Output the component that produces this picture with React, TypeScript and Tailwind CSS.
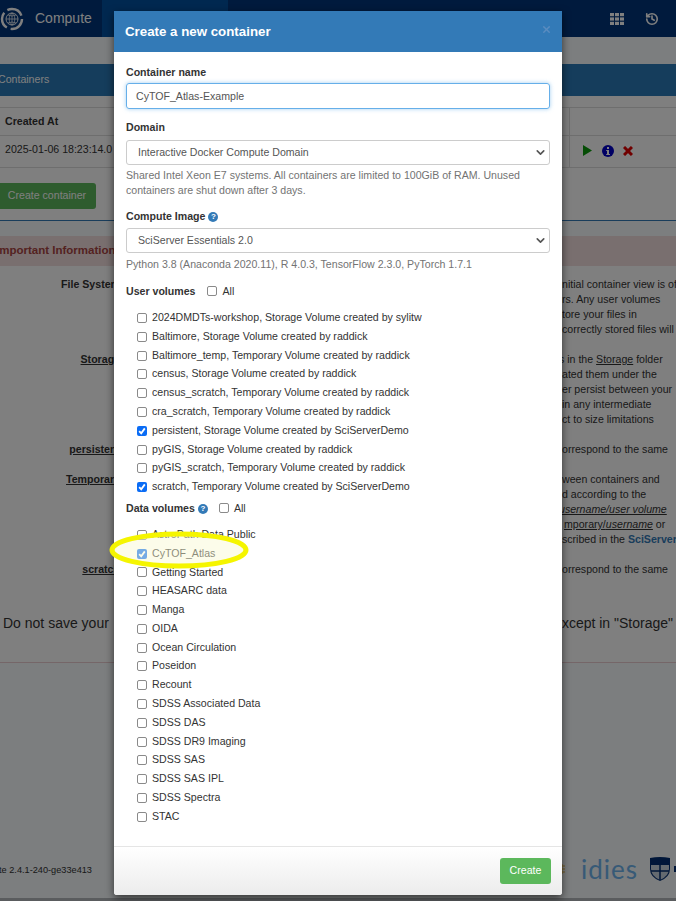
import type { ReactNode } from 'react';
import { ChevronDown, History, X } from 'lucide-react';

const userVolumes = [
  { name: '2024DMDTs-workshop, Storage Volume created by sylitw' },
  { name: 'Baltimore, Storage Volume created by raddick' },
  { name: 'Baltimore_temp, Temporary Volume created by raddick' },
  { name: 'census, Storage Volume created by raddick' },
  { name: 'census_scratch, Temporary Volume created by raddick' },
  { name: 'cra_scratch, Temporary Volume created by raddick' },
  { name: 'persistent, Storage Volume created by SciServerDemo', checked: true },
  { name: 'pyGIS, Storage Volume created by raddick' },
  { name: 'pyGIS_scratch, Temporary Volume created by raddick' },
  { name: 'scratch, Temporary Volume created by SciServerDemo', checked: true },
];

const dataVolumes = [
  { name: 'AstroPath Data Public' },
  { name: 'CyTOF_Atlas', checked: true },
  { name: 'Getting Started' },
  { name: 'HEASARC data' },
  { name: 'Manga' },
  { name: 'OIDA' },
  { name: 'Ocean Circulation' },
  { name: 'Poseidon' },
  { name: 'Recount' },
  { name: 'SDSS Associated Data' },
  { name: 'SDSS DAS' },
  { name: 'SDSS DR9 Imaging' },
  { name: 'SDSS SAS' },
  { name: 'SDSS SAS IPL' },
  { name: 'SDSS Spectra' },
  { name: 'STAC' },
];

function Check({ checked }: { checked?: boolean }) {
  if (checked) {
    return (
      <span className="flex h-[10px] w-[10px] shrink-0 items-center justify-center rounded-[2px] bg-[#0a6cf5]">
        <svg viewBox="0 0 10 10" className="h-[10px] w-[10px]" fill="none" stroke="white" strokeWidth="1.8">
          <path d="M2.2 5.2 L4.2 7.4 L7.8 2.4" />
        </svg>
      </span>
    );
  }
  return <span className="block h-[10px] w-[10px] shrink-0 rounded-[2px] border border-[#8a8a8a] bg-white" />;
}

function VolumeRow({ name, checked }: { name: string; checked?: boolean }) {
  return (
    <div className="flex h-[18.8px] items-center gap-[5px] pl-[11px]">
      <Check checked={checked} />
      <span>{name}</span>
    </div>
  );
}

function HelpDot() {
  return (
    <span className="ml-[3px] inline-flex h-[10px] w-[10px] items-center justify-center rounded-full bg-[#337ab7] text-[8px] font-bold leading-none text-white">
      ?
    </span>
  );
}

function SelectBox({ value }: { value: string }) {
  return (
    <div className="flex h-[25px] items-center justify-between rounded-[3px] border border-[#ccc] pl-[11px] pr-[2px] text-[#555]">
      <span>{value}</span>
      <ChevronDown size={13} strokeWidth={3} className="text-[#555]" />
    </div>
  );
}

function InfoRow({ label, lines, className, plain }: { label: string; lines: ReactNode[]; className: string; plain?: boolean }) {
  return (
    <div className={`flex justify-between leading-[15px] ${className}`}>
      <span className={`w-[120px] shrink-0 text-right font-bold ${plain ? '' : 'underline'}`}>{label}</span>
      <div className="w-[114px] shrink-0 whitespace-nowrap">
        {lines.map((line, i) => (
          <div key={i}>{line}</div>
        ))}
      </div>
    </div>
  );
}

export default function App() {
  return (
    <div className="relative flex h-[901px] w-[676px] flex-col overflow-hidden bg-[#f8fcff] font-['Liberation_Sans',Arial,sans-serif] text-[10.6px] text-[#333]">
      {/* Page behind the modal */}
      <header className="flex h-[37px] shrink-0 items-center bg-[#00357a]">
        <svg viewBox="0 0 24 24" className="h-[24px] w-[24px]" fill="none" stroke="#ffffff">
          <circle cx="12" cy="12" r="10" strokeWidth="2.4" strokeDasharray="17 4" />
          <circle cx="12" cy="12" r="6" strokeWidth="0.9" />
          <path d="M6 12 H18 M12 6 V18 M8 8 Q12 10 16 8 M8 16 Q12 14 16 16" strokeWidth="0.7" />
          <ellipse cx="12" cy="12" rx="2.8" ry="6" strokeWidth="0.7" />
        </svg>
        <span className="ml-[11px] text-[14px] text-white">Compute</span>
        <div className="ml-[10px] h-full w-[126px] bg-[#0050a0]" />
        <div className="flex h-full flex-1 items-center justify-end gap-[21px] pr-[17px] text-white">
          <svg viewBox="0 0 14 12" className="h-[12px] w-[14px]" fill="#ffffff">
            <rect x="0" y="0" width="4" height="3.2" />
            <rect x="5" y="0" width="4" height="3.2" />
            <rect x="10" y="0" width="4" height="3.2" />
            <rect x="0" y="4.4" width="4" height="3.2" />
            <rect x="5" y="4.4" width="4" height="3.2" />
            <rect x="10" y="4.4" width="4" height="3.2" />
            <rect x="0" y="8.8" width="4" height="3.2" />
            <rect x="5" y="8.8" width="4" height="3.2" />
            <rect x="10" y="8.8" width="4" height="3.2" />
          </svg>
          <History size={14} strokeWidth={2.8} />
        </div>
      </header>

      <div className="mt-[27px] flex h-[32px] shrink-0 items-center bg-[#2a7ab8] text-white">
        <span className="-ml-[2px]">Containers</span>
      </div>

      <div className="bg-white pt-[11px]">
        <div className="border-y border-[#ddd]">
          <div className="flex h-[28px] items-center border-b border-[#ddd]">
            <span className="pl-[5px] font-bold">Created At</span>
            <div className="ml-auto h-full w-[107px] border-l border-[#ddd]" />
          </div>
          <div className="flex h-[31px] items-center">
            <span className="mb-[3px] pl-[5px]">2025-01-06 18:23:14.0</span>
            <div className="ml-auto flex h-full w-[107px] items-center border-l border-[#ddd] pb-[2px] pl-[13px]">
              <svg viewBox="0 0 10 12" className="h-[11px] w-[9px]">
                <path d="M0 0 L10 6 L0 12 Z" fill="#0a9a0a" />
              </svg>
              <svg viewBox="0 0 12 12" className="ml-[10px] h-[12px] w-[12px]">
                <circle cx="6" cy="6" r="6" fill="#0000c8" />
                <rect x="5" y="2" width="2" height="2" fill="#ffffff" />
                <path d="M4.2 5 H7 V9 H8 V10 H4.2 V9 H5 V6 H4.2 Z" fill="#ffffff" />
              </svg>
              <svg viewBox="0 0 10 10" className="ml-[9px] h-[10px] w-[10px]" fill="none" stroke="#e00000" strokeWidth="3">
                <path d="M1 1 L9 9 M9 1 L1 9" />
              </svg>
            </div>
          </div>
        </div>
        <div className="mt-[15px] flex h-[26px] w-[96px] items-center justify-center rounded-r-[3px] bg-[#5cb85c] pr-[2px] text-white">
          Create container
        </div>
        <div className="mt-[11px] border-t border-[#337ab7]" />
      </div>

      <div className="mt-[15px]">
        <div className="flex h-[30px] items-center bg-[#f2dede] text-[11.5px] font-bold text-[#a94442]">
          <span className="-ml-[4px] whitespace-nowrap">Important Information</span>
        </div>
        <div className="h-[397px] border-b border-[#ebccd1] bg-white pt-[11px]">
          <InfoRow
            label="File System"
            plain
            className="h-[75px]"
            lines={['nitial container view is of', 'rs. Any user volumes', 'tore your files in', 'correctly stored files will']}
          />
          <InfoRow
            label="Storage"
            className="h-[90px]"
            lines={[
              <span className="-ml-[3px]">s in the <span className="underline">Storage</span> folder</span>,
              'ated them under the',
              'er persist between your',
              'in any intermediate',
              'ct to size limitations',
            ]}
          />
          <InfoRow label="persistent" className="h-[30px]" lines={['orrespond to the same']} />
          <InfoRow
            label="Temporary"
            className="h-[90px]"
            lines={[
              'ween containers and',
              'd according to the',
              <span className="-ml-[3px] italic underline">username/user volume</span>,
              <span className="ml-[2px]"><span className="underline">mporary/<span className="italic">username</span></span> or</span>,
              <>scribed in the <span className="font-bold text-[#337ab7]">SciServer</span></>,
            ]}
          />
          <InfoRow label="scratch" className="h-[30px]" lines={['orrespond to the same']} />
          <div className="mt-[23px] flex justify-between pl-[3px] pr-[3px] text-[14px] leading-[16px]">
            <span>Do not save your</span>
            <span>xcept in "Storage"</span>
          </div>
        </div>
      </div>

      <div className="mt-auto flex items-center justify-between pb-[16px]">
        <span className="-ml-[1px] mt-[4px] text-[9.2px]">te 2.4.1-240-ge33e413</span>
        <div className="flex items-center">
          <svg viewBox="0 0 6 10" className="mr-[16px] h-[10px] w-[6px]" fill="none" stroke="#e0b040" strokeWidth="1">
            <path d="M0 2 H6 M0 5 H6 M0 8 H6 M3 0 V10" />
          </svg>
          <span className="font-['Lato',sans-serif] text-[26px] leading-none tracking-[1px] text-[#6fb4ee]">idies</span>
          <svg viewBox="0 0 22 24" className="ml-[11px] h-[24px] w-[22px]">
            <path d="M1 1 Q11 -1 21 1 V12 Q21 20 11 24 Q1 20 1 12 Z" fill="#002d72" />
            <path d="M2 8 H20 V12 Q20 19 11 23 Q2 19 2 12 Z" fill="#c8d4e0" />
            <path d="M11 8 V23 M2 14 H20" stroke="#002d72" strokeWidth="1.5" />
          </svg>
          <span className="ml-[3px] h-[6px] w-[2px] bg-[#002d72]" />
        </div>
      </div>
      <div className="h-[3px] shrink-0 bg-[#b4b8bc]" />

      {/* Backdrop */}
      <div className="absolute inset-0 bg-black/50" />

      {/* Modal */}
      <div className="absolute left-[114px] top-[11px] w-[448px] rounded-b-[3px] bg-white shadow-[0_3px_9px_rgba(0,0,0,0.6)]">
        <div className="relative flex h-[41px] items-center bg-[#337ab7] pl-[11px]">
          <span className="text-[13.3px] font-bold text-white">Create a new container</span>
          <X size={11} strokeWidth={3} className="absolute right-[10px] top-[13px] text-[#5a8cc0]" />
        </div>

        <div className="h-[794px] px-[12px] pt-[13px]">
          <div className="font-bold leading-[15px]">Container name</div>
          <div className="mt-[3px] flex h-[26px] items-center rounded-[3px] border border-[#66afe9] pl-[9px] pt-[1px] text-[#555] shadow-[0_0_4px_rgba(102,175,233,0.6)]">
            CyTOF_Atlas-Example
          </div>

          <div className="mt-[11px] font-bold leading-[15px]">Domain</div>
          <div className="mt-[5px]"><SelectBox value="Interactive Docker Compute Domain" /></div>
          <div className="mt-[3px] leading-[15px] text-[#737373]">
            Shared Intel Xeon E7 systems. All containers are limited to 100GiB of RAM. Unused
            <br />
            containers are shut down after 3 days.
          </div>

          <div className="mt-[11px] flex items-center font-bold leading-[15px]">
            Compute Image
            <HelpDot />
          </div>
          <div className="mt-[4px]"><SelectBox value="SciServer Essentials 2.0" /></div>
          <div className="mt-[4px] leading-[15px] text-[#737373]">
            Python 3.8 (Anaconda 2020.11), R 4.0.3, TensorFlow 2.3.0, PyTorch 1.7.1
          </div>

          <div className="mt-[12px] flex items-center leading-[15px]">
            <span className="font-bold">User volumes</span>
            <span className="-mt-[2px] ml-[12px]"><Check /></span>
            <span className="ml-[5px]">All</span>
          </div>
          <div className="mt-[9.6px]">
            {userVolumes.map((v) => (
              <VolumeRow key={v.name} name={v.name} checked={v.checked} />
            ))}
          </div>

          <div className="mt-[4.9px] flex items-center leading-[15px]">
            <span className="font-bold">Data volumes</span>
            <HelpDot />
            <span className="-mt-[2px] ml-[11px]"><Check /></span>
            <span className="ml-[5px]">All</span>
          </div>
          <div className="mt-[9px]">
            {dataVolumes.map((v) => (
              <VolumeRow key={v.name} name={v.name} checked={v.checked} />
            ))}
          </div>
        </div>

        <div className="flex h-[49px] items-center justify-end rounded-b-[3px] border-t border-[#e5e5e5] bg-gradient-to-b from-white to-[#ececec] pr-[11px]">
          <div className="flex h-[26px] w-[51px] items-center justify-center rounded-[3px] bg-[#5cb85c] text-white">Create</div>
        </div>
      </div>

      {/* Yellow highlight drawn over the screenshot */}
      <svg className="absolute left-[105px] top-[527px] h-[46px] w-[148px]" viewBox="0 0 148 46">
        <ellipse cx="74" cy="23" rx="67" ry="16" fill="#f8f9d0" fillOpacity="0.45" stroke="#f5f500" strokeWidth="5" />
      </svg>
    </div>
  );
}
